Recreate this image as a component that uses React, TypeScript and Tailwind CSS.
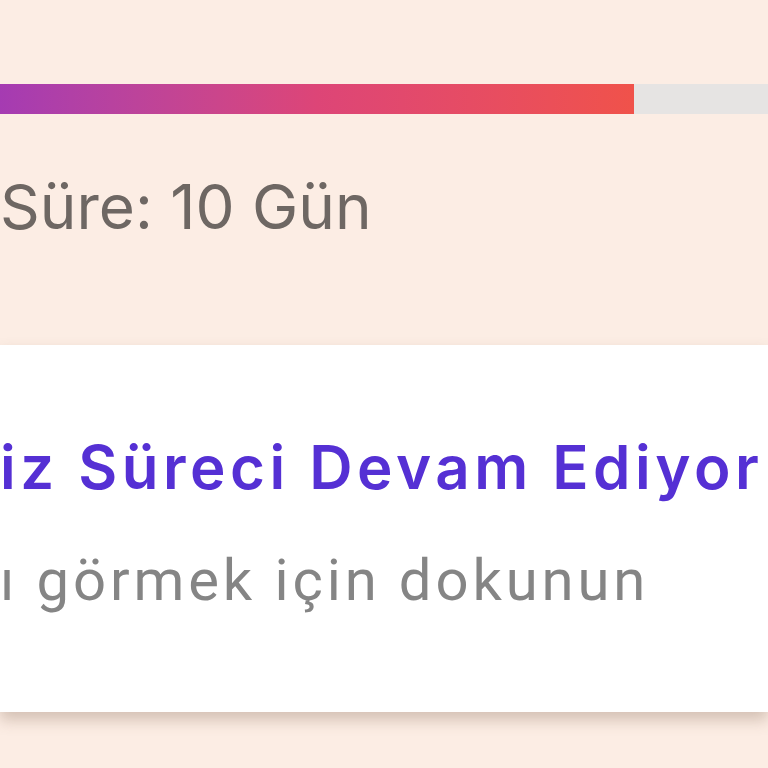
export default function App() {
  return (
    <div className="w-[768px] h-[768px] overflow-hidden bg-[#fcede4] flex flex-col" style={{ fontFamily: 'Inter, "Noto Sans", sans-serif' }}>
      {/* progress */}
      <div className="mt-[84px] h-[30px] flex shrink-0">
        <div className="w-[634px] h-full bg-gradient-to-r from-[#a53bb2] via-[#dd4577] to-[#f0524a]" />
        <div className="flex-1 h-full bg-[#e6e4e3]" />
      </div>

      <div className="mt-[62px] h-[169px] shrink-0 whitespace-nowrap text-[62px] leading-none text-[#6e6763]">
        Süre: 10 Gün
      </div>

      {/* card */}
      <div className="h-[367px] shrink-0 bg-white shadow-[0_8px_14px_rgba(120,90,70,0.3)] flex flex-col">
        <div className="mt-[92px] whitespace-nowrap text-[60px] leading-none font-semibold tracking-[0.075em] text-[#5530d4]">
          iz Süreci Devam Ediyor
        </div>
        <div className="mt-[54px] whitespace-nowrap text-[58px] leading-none tracking-[0.067em] text-[#858585]" style={{ fontFamily: 'Roboto, "Liberation Sans", sans-serif' }}>
          ı görmek için dokunun
        </div>
      </div>
    </div>
  )
}
